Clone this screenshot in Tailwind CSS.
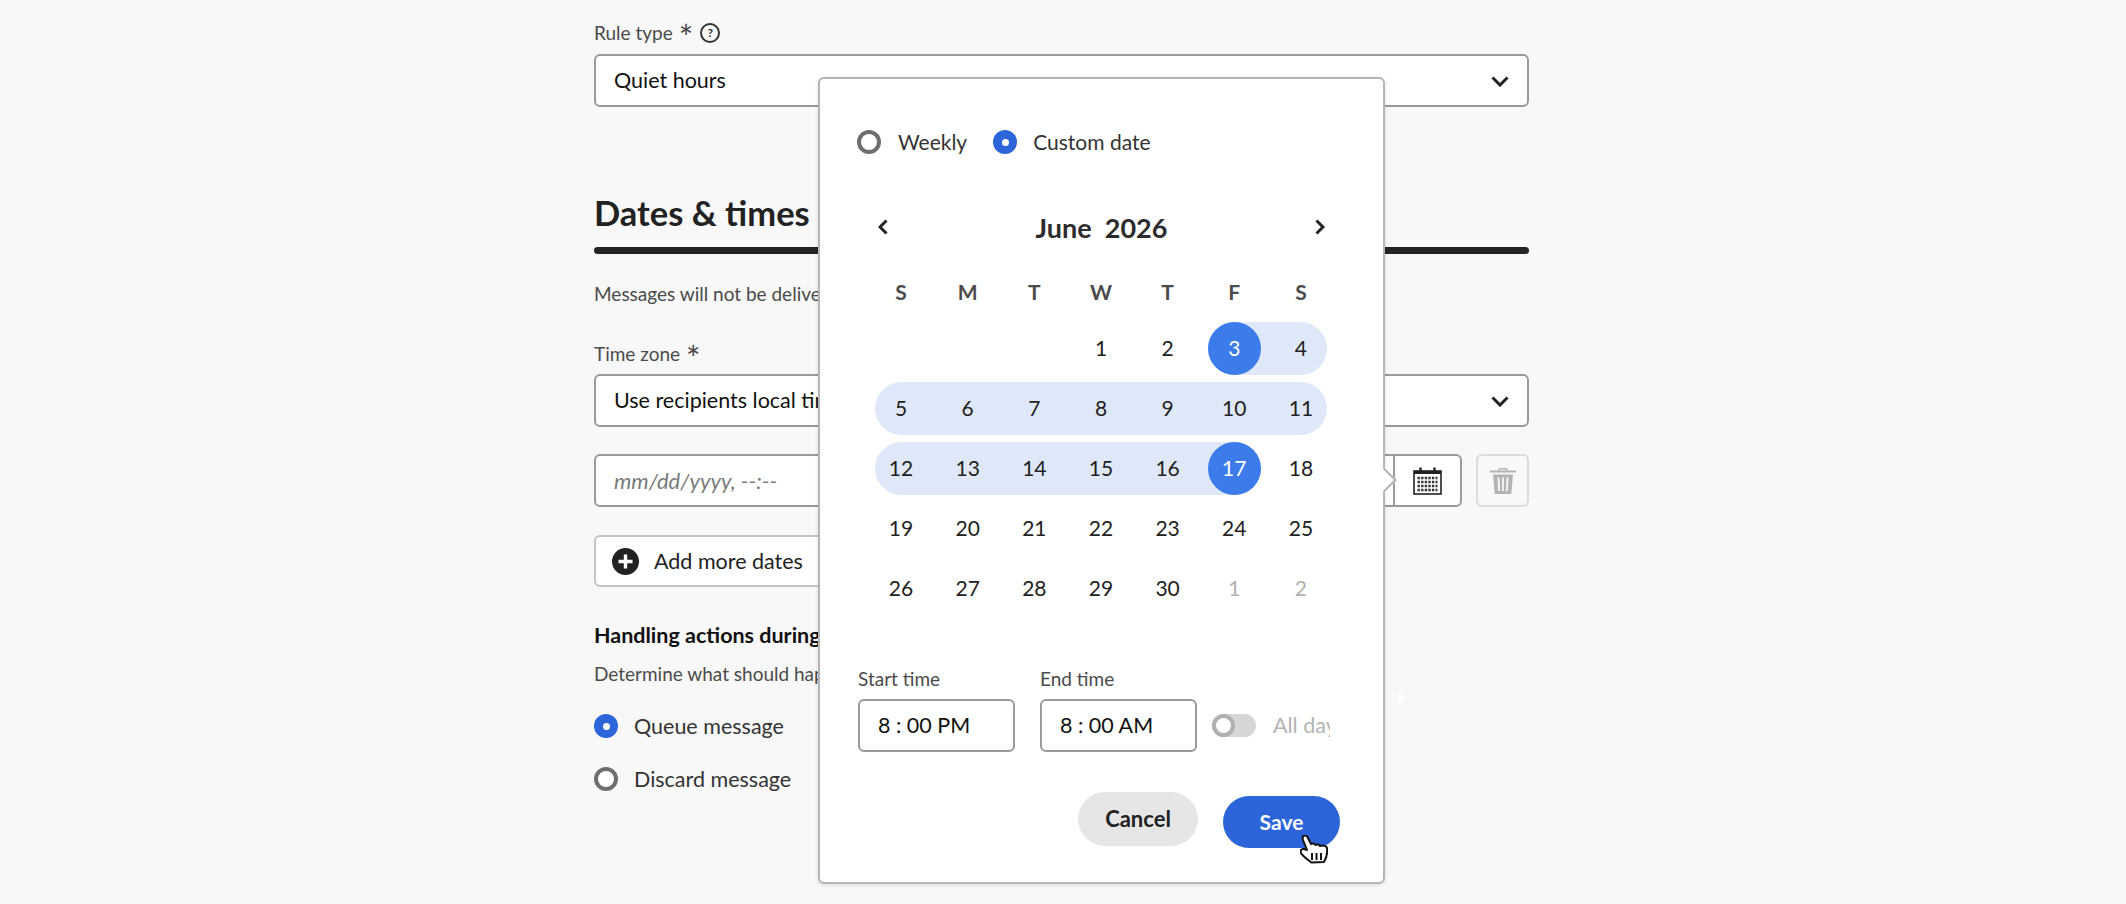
<!DOCTYPE html>
<html lang="en">
<head>
<meta charset="UTF-8" />
<title>Quiet hours rule</title>
<script src="https://cdn.jsdelivr.net/npm/@tailwindcss/browser@4"></script>
</head>
<body class="bg-[#f8f8f8] text-[#222] font-['Lato',sans-serif] antialiased">
<div class="relative h-[904px] w-[2126px] overflow-hidden">

  <!-- form column -->
  <main class="ml-[594px] w-[935px] pt-[20px]">
    <div class="flex h-[26px] items-center text-[19px] text-[#4b4b4b]">
      <span>Rule type</span>
      <span class="ml-[6px] mt-[8px] text-[34px] leading-none">*</span>
      <span class="ml-[7px] flex h-[20px] w-[20px] items-center justify-center rounded-full border-2 border-[#333] text-[12px] font-bold text-[#333]">?</span>
    </div>
    <div class="mt-[8px] flex h-[53px] items-center justify-between rounded-[6px] border-2 border-[#9a9a9a] bg-white pl-[18px] pr-[18px] text-[21.500px] text-[#111]">
      <span>Quiet hours</span>
      <svg class="h-[12px] w-[18px]" viewBox="0 0 18 12" fill="none" stroke="#222" stroke-width="3"><path d="M1.500 2.500 9 10l7.500-7.500"/></svg>
    </div>

    <h2 class="mt-[78px] h-[56px] text-[34.500px] font-bold leading-[56px] text-[#222]">Dates &amp; times</h2>
    <div class="mt-[6px] h-[7px] rounded-full bg-[#242424]"></div>
    <p class="mt-[26px] h-[28px] text-[19px] leading-[28px] text-[#4b4b4b]">Messages will not be delivered during the dates and times below</p>

    <div class="mt-[33px] flex h-[26px] items-center text-[19px] text-[#4b4b4b]">
      <span>Time zone</span>
      <span class="ml-[6px] mt-[8px] text-[34px] leading-none">*</span>
    </div>
    <div class="mt-[7px] flex h-[53px] items-center justify-between rounded-[6px] border-2 border-[#9a9a9a] bg-white pl-[18px] pr-[18px] text-[21.500px] text-[#111]">
      <span>Use recipients local time zone</span>
      <svg class="h-[12px] w-[18px]" viewBox="0 0 18 12" fill="none" stroke="#222" stroke-width="3"><path d="M1.500 2.500 9 10l7.500-7.500"/></svg>
    </div>

    <div class="mt-[27px] flex h-[53px] gap-[14px]">
      <div class="flex w-[868px] rounded-[6px] border-2 border-[#9a9a9a] bg-white">
        <div class="flex flex-1 items-center pl-[18px] text-[22px] italic text-[#7a7a7a]">mm/dd/yyyy, --:--</div>
        <div class="flex w-[67px] items-center justify-center border-l-2 border-[#9a9a9a]">
          <svg class="h-[28px] w-[29px]" viewBox="0 0 29 28" fill="none">
            <rect x="1" y="4" width="27" height="23" stroke="#222" stroke-width="1.600"/>
            <rect x="1" y="4" width="27" height="3" fill="#222"/>
            <path d="M7.500 0.500v6M21.500 0.500v6" stroke="#222" stroke-width="2.400"/>
            <path d="M4.500 11h20M4.500 15h20M4.500 19h20M4.500 23h20" stroke="#333" stroke-width="2.400" stroke-dasharray="2.400 1.200"/>
          </svg>
        </div>
      </div>
      <div class="flex w-[53px] items-center justify-center rounded-[6px] border-2 border-[#dcdcdc]">
        <svg class="h-[28px] w-[26px]" viewBox="0 0 26 28" fill="#b4b4b4">
          <path d="M8 3.500 9 1h8l1 2.500h8v2H0v-2zM10 2.500l-.4 1h6.800l-.4-1z" fill-rule="evenodd"/>
          <path d="M3 7.500h20L21.300 27H4.700zM7.500 10.500l.8 13.500h1.800L9.500 10.500zM12.100 10.500V24h1.800V10.500zM16.500 10.500 15.900 24h1.800l.8-13.500z" fill-rule="evenodd"/>
        </svg>
      </div>
    </div>

    <div class="mt-[28px] flex h-[52px] w-[380px] items-center rounded-[6px] border-2 border-[#c4c4c4] bg-white pl-[16px] text-[21.500px] text-[#222]">
      <svg class="h-[27px] w-[27px]" viewBox="0 0 27 27"><circle cx="13.500" cy="13.500" r="13.500" fill="#222"/><path d="M13.500 6.500v14M6.500 13.500h14" stroke="#fff" stroke-width="3.400"/></svg>
      <span class="ml-[15px]">Add more dates</span>
    </div>

    <h3 class="mt-[33px] h-[30px] text-[21.500px] font-bold leading-[30px] text-[#111]">Handling actions during quiet hours</h3>
    <p class="mt-[10px] h-[28px] text-[19px] leading-[28px] text-[#4b4b4b]">Determine what should happen to messages during these hours</p>

    <div class="mt-[24px] flex h-[28px] items-center text-[21.500px] text-[#333]">
      <span class="flex h-[24px] w-[24px] items-center justify-center rounded-full bg-[#2b65d9]"><span class="h-[7px] w-[7px] rounded-full bg-white"></span></span>
      <span class="ml-[16px]">Queue message</span>
    </div>
    <div class="mt-[25px] flex h-[28px] items-center text-[21.500px] text-[#333]">
      <span class="h-[24px] w-[24px] rounded-full border-[4px] border-[#6e6e6e] bg-white"></span>
      <span class="ml-[16px]">Discard message</span>
    </div>
  </main>

  <!-- faint leftover patch right of the popover -->
  <div class="absolute left-[1398px] top-[693px] h-[10px] w-[5px] bg-white/80"></div>

  <!-- popover -->
  <section class="absolute left-[818px] top-[77px] h-[807px] w-[567px] rounded-[6px] border-2 border-[#b5b5b5] bg-white shadow-[0_1px_4px_rgba(0,0,0,0.12)]">
    <!-- popover tip -->
    <div class="absolute left-[555px] top-[392px] h-[18px] w-[18px] rotate-45 border-r-2 border-t-2 border-[#b5b5b5] bg-white"></div>

    <div class="ml-[37px] mt-[49px] flex h-[28px] items-center text-[21px] text-[#333]">
      <span class="h-[24px] w-[24px] rounded-full border-[4px] border-[#6e6e6e] bg-white"></span>
      <span class="ml-[17px]">Weekly</span>
      <span class="ml-[26px] flex h-[24px] w-[24px] items-center justify-center rounded-full bg-[#2b65d9]"><span class="h-[7px] w-[7px] rounded-full bg-white"></span></span>
      <span class="ml-[16px]">Custom date</span>
    </div>

    <div class="ml-[55px] mt-[52px] flex h-[40px] w-[454px] items-center justify-between pl-[3px] pr-[4px]">
      <svg class="mb-[3px] h-[16px] w-[10px]" viewBox="0 0 10 16" fill="none" stroke="#222" stroke-width="3"><path d="M8.500 1.500 2 8l6.500 6.500"/></svg>
      <div class="text-[27px] font-bold text-[#2c2c2c]">June&nbsp; 2026</div>
      <svg class="mb-[3px] h-[16px] w-[10px]" viewBox="0 0 10 16" fill="none" stroke="#222" stroke-width="3"><path d="M1.500 1.500 8 8l-6.500 6.500"/></svg>
    </div>

    <div class="ml-[54.500px] mt-[28px] grid w-[453px] grid-cols-[repeat(7,53px)] gap-x-[13.670px] text-center text-[21px] font-bold text-[#4b4b4b]">
      <div>S</div><div>M</div><div>T</div><div>W</div><div>T</div><div>F</div><div>S</div>
    </div>

    <!-- weeks -->
    <div class="ml-[54.500px] mt-[14px] grid w-[453px] grid-cols-[repeat(7,53px)] auto-rows-[53px] gap-x-[13.670px] gap-y-[7px] text-[21px] text-[#222]">
      <div class="col-start-6 col-span-2 row-start-1 rounded-full bg-[#dfe8f9]"></div>
      <div class="col-start-4 row-start-1 flex items-center justify-center">1</div>
      <div class="col-start-5 row-start-1 flex items-center justify-center">2</div>
      <div class="col-start-6 row-start-1 flex items-center justify-center rounded-full bg-[#3b7bea] text-white">3</div>
      <div class="col-start-7 row-start-1 flex items-center justify-center">4</div>

      <div class="col-start-1 col-span-7 row-start-2 rounded-full bg-[#dfe8f9]"></div>
      <div class="col-start-1 row-start-2 flex items-center justify-center">5</div>
      <div class="col-start-2 row-start-2 flex items-center justify-center">6</div>
      <div class="col-start-3 row-start-2 flex items-center justify-center">7</div>
      <div class="col-start-4 row-start-2 flex items-center justify-center">8</div>
      <div class="col-start-5 row-start-2 flex items-center justify-center">9</div>
      <div class="col-start-6 row-start-2 flex items-center justify-center">10</div>
      <div class="col-start-7 row-start-2 flex items-center justify-center">11</div>

      <div class="col-start-1 col-span-6 row-start-3 rounded-full bg-[#dfe8f9]"></div>
      <div class="col-start-1 row-start-3 flex items-center justify-center">12</div>
      <div class="col-start-2 row-start-3 flex items-center justify-center">13</div>
      <div class="col-start-3 row-start-3 flex items-center justify-center">14</div>
      <div class="col-start-4 row-start-3 flex items-center justify-center">15</div>
      <div class="col-start-5 row-start-3 flex items-center justify-center">16</div>
      <div class="col-start-6 row-start-3 flex items-center justify-center rounded-full bg-[#3b7bea] text-white">17</div>
      <div class="col-start-7 row-start-3 flex items-center justify-center">18</div>

      <div class="col-start-1 row-start-4 flex items-center justify-center">19</div>
      <div class="col-start-2 row-start-4 flex items-center justify-center">20</div>
      <div class="col-start-3 row-start-4 flex items-center justify-center">21</div>
      <div class="col-start-4 row-start-4 flex items-center justify-center">22</div>
      <div class="col-start-5 row-start-4 flex items-center justify-center">23</div>
      <div class="col-start-6 row-start-4 flex items-center justify-center">24</div>
      <div class="col-start-7 row-start-4 flex items-center justify-center">25</div>

      <div class="col-start-1 row-start-5 flex items-center justify-center">26</div>
      <div class="col-start-2 row-start-5 flex items-center justify-center">27</div>
      <div class="col-start-3 row-start-5 flex items-center justify-center">28</div>
      <div class="col-start-4 row-start-5 flex items-center justify-center">29</div>
      <div class="col-start-5 row-start-5 flex items-center justify-center">30</div>
      <div class="col-start-6 row-start-5 flex items-center justify-center text-[#b0b0b0]">1</div>
      <div class="col-start-7 row-start-5 flex items-center justify-center text-[#b0b0b0]">2</div>
    </div>

    <!-- times -->
    <div class="ml-[38px] mt-[51px] flex items-end">
      <div class="w-[157px]">
        <div class="h-[26px] text-[19px] leading-[26px] text-[#4b4b4b]">Start time</div>
        <div class="mt-[7px] flex h-[53px] items-center rounded-[6px] border-2 border-[#9a9a9a] pl-[18px] text-[21.500px] text-[#111]">8 : 00 PM</div>
      </div>
      <div class="ml-[25px] w-[157px]">
        <div class="h-[26px] text-[19px] leading-[26px] text-[#4b4b4b]">End time</div>
        <div class="mt-[7px] flex h-[53px] items-center rounded-[6px] border-2 border-[#9a9a9a] pl-[18px] text-[21.500px] text-[#111]">8 : 00 AM</div>
      </div>
      <div class="ml-[15px] flex h-[53px] w-[118px] items-center overflow-hidden">
        <span class="flex h-[23px] w-[44px] shrink-0 rounded-full bg-[#d6d6d6]"><span class="h-[23px] w-[23px] rounded-full border-[4px] border-[#b0b0b0] bg-white"></span></span>
        <span class="ml-[17px] whitespace-nowrap text-[21.500px] text-[#b4b4b4]">All day</span>
      </div>
    </div>

    <!-- actions -->
    <div class="ml-[258px] mt-[40px] flex items-start">
      <button class="h-[54px] w-[120px] rounded-full bg-[#e6e6e6] text-[22px] font-bold text-[#222]">Cancel</button>
      <button class="ml-[25px] mt-[4px] h-[52px] w-[117px] rounded-full bg-[#2b65d9] text-[21px] font-bold text-white">Save</button>
    </div>

    <!-- hand cursor -->
    <svg class="absolute left-[480px] top-[756px] h-[29px] w-[28px]" viewBox="0 0 28 29" fill="#fff" stroke="#111" stroke-width="2" stroke-linejoin="round">
      <path d="M3 1.500C4.500 0 6.500.5 7.500 2L11 9c1.500-1 3.500-.8 4.500 1 1.500-1 3.500-.7 4.500 1 2-.8 6.500-.5 7 2 .5 4-.5 10-3 14l-12.500.5C8 25 3 21.500 1 18c-1-2 0-4.500 3-4l3 1L3 5c-.5-1.500-.5-2.500 0-3.500z"/>
      <path d="M12 18v7M16.500 18v7M21 18v7" fill="none"/>
    </svg>
  </section>
</div>
</body>
</html>
